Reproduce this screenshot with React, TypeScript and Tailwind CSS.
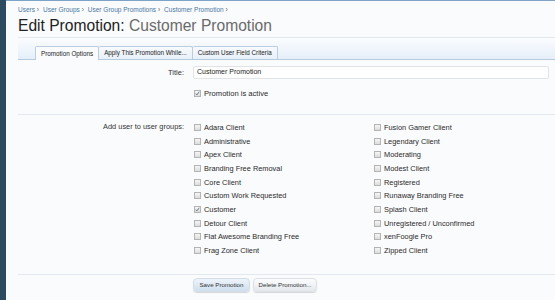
import React from "react";

const colA = [
  ["Adara Client", false],
  ["Administrative", false],
  ["Apex Client", false],
  ["Branding Free Removal", false],
  ["Core Client", false],
  ["Custom Work Requested", false],
  ["Customer", true],
  ["Detour Client", false],
  ["Flat Awesome Branding Free", false],
  ["Frag Zone Client", false],
] as const;
const colB = [
  ["Fusion Gamer Client", false],
  ["Legendary Client", false],
  ["Moderating", false],
  ["Modest Client", false],
  ["Registered", false],
  ["Runaway Branding Free", false],
  ["Splash Client", false],
  ["Unregistered / Unconfirmed", false],
  ["xenFoogle Pro", false],
  ["Zipped Client", false],
] as const;

function Box({ checked }: { checked: boolean }) {
  return (
    <span className="relative inline-block w-[7px] h-[7px] shrink-0 border border-[#b4b4b4] bg-gradient-to-b from-[#f6f6f6] to-[#dcdcdc]">
      {checked && (
        <svg viewBox="0 0 8 8" className="absolute left-[0px] top-[0px] w-[5px] h-[5px]">
          <path d="M1.2 4.2 L3 6.2 L6.8 1.2" fill="none" stroke="#4a6078" strokeWidth="1.3" />
        </svg>
      )}
    </span>
  );
}

function Check({ label, checked }: { label: string; checked: boolean }) {
  return (
    <div className="flex items-center gap-[3px] text-[7.4px] leading-[9px] text-[#2a2a2a]">
      <Box checked={checked} />
      <span>{label}</span>
    </div>
  );
}

export default function App() {
  const crumbs = ["Users", "User Groups", "User Group Promotions", "Customer Promotion"];
  return (
    <div
      className="flex w-[555px] h-[300px] overflow-hidden"
      style={{ fontFamily: '"Liberation Sans", Arial, sans-serif' }}
    >
      <div className="w-[6px] shrink-0 bg-[#2d4a5e]" />
      <div className="flex-1 flex flex-col bg-[#fafbfd]">
        <div className="h-[1px] bg-[#7fa3c6]" />
        <div className="pl-[12px] pt-[4px] h-[14px] leading-[10px] text-[6.5px] text-[#4b77a3] flex">
          {crumbs.map((c) => (
            <span key={c} className="mr-[4px]">
              {c} <span className="text-[#555]">›</span>
            </span>
          ))}
        </div>
        <h1 className="pl-[12px] mt-[2px] h-[18px] leading-[18px] text-[15.6px] text-[#222]">
          Edit Promotion: <span className="text-[#6a6a6a]">Customer Promotion</span>
        </h1>
        <div className="ml-[12px] mt-[2px] h-[1px] bg-[#e3e8ee]" />
        <div className="ml-[12px] h-[22px] flex items-end pl-[17px] border-b border-[#b6cade] bg-gradient-to-b from-[#fbfcfe] to-[#e5eff9]">
          <div className="h-[14px] -mb-px px-[5px] flex items-center text-[6.3px] text-[#222] border border-b-0 border-[#bccde0] rounded-t-[2px] bg-[#fafbfd]">
            Promotion Options
          </div>
          <div className="h-[13px] px-[5px] flex items-center text-[6.3px] text-[#222] border border-b-0 border-l-0 border-[#bccde0] rounded-t-[2px] bg-gradient-to-b from-[#f7fafd] to-[#e8f0f8]">
            Apply This Promotion While...
          </div>
          <div className="h-[13px] px-[5px] flex items-center text-[6.3px] text-[#222] border border-b-0 border-l-0 border-[#bccde0] rounded-t-[2px] bg-gradient-to-b from-[#f7fafd] to-[#e8f0f8]">
            Custom User Field Criteria
          </div>
        </div>

        <div className="mt-[6px] flex items-center h-[13px]">
          <div className="w-[178px] text-right text-[7.5px] text-[#333]">Title:</div>
          <div className="ml-[9px] w-[356px] h-[13px] border border-[#e0e4e9] rounded-[2px] bg-white flex items-center pl-[3px] text-[7px] text-[#222]">
            Customer Promotion
          </div>
        </div>
        <div className="mt-[9px] flex items-center h-[11px]">
          <div className="w-[178px]" />
          <div className="ml-[10px] flex items-center gap-[3px] text-[7.6px] leading-[9px] text-[#2a2a2a]">
            <Box checked={true} />
            <span>Promotion is active</span>
          </div>
        </div>
        <div className="ml-[12px] mt-[15px] h-[1px] bg-[#e3e8ee]" />

        <div className="mt-[5px] flex">
          <div className="w-[178px] h-[14px] flex items-center justify-end text-[7.4px] text-[#333]">
            Add user to user groups:
          </div>
          <div className="ml-[10px] grid grid-flow-col grid-cols-[180px_180px] grid-rows-[14px_14px_13px_14px_14px_13px_14px_14px_13px_14px]">
            {colA.map(([l, c]) => (
              <Check key={l} label={l} checked={c} />
            ))}
            {colB.map(([l, c]) => (
              <Check key={l} label={l} checked={c} />
            ))}
          </div>
        </div>

        <div className="ml-[12px] mt-[17px] h-[1px] bg-[#e3e8ee]" />
        <div className="mt-[3px] flex items-center">
          <div className="w-[178px]" />
          <div className="ml-[9px] flex gap-[3px]">
            <button className="w-[57px] h-[14px] rounded-[4px] text-[6.2px] text-[#333] border border-[#d3dde8] bg-gradient-to-b from-[#eef4fa] to-[#cfdfee] shadow-[0_1px_1px_rgba(0,0,0,0.15)]">
              Save Promotion
            </button>
            <button className="w-[64px] h-[14px] rounded-[4px] text-[6.2px] text-[#333] border border-[#dde1e6] bg-gradient-to-b from-[#fbfcfd] to-[#e5e8ec] shadow-[0_1px_1px_rgba(0,0,0,0.15)]">
              Delete Promotion...
            </button>
          </div>
        </div>
      </div>
    </div>
  );
}
